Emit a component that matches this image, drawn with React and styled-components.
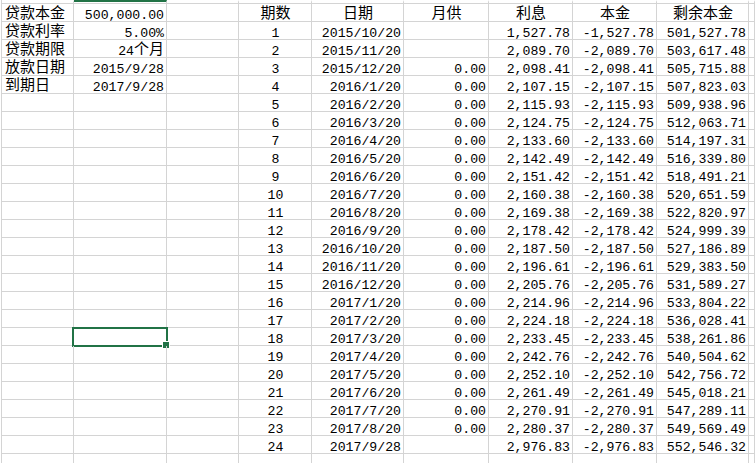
import styled, { createGlobalStyle } from "styled-components";

const GRID = "#d4d4d4";
const GREEN = "#217346";
const COLS = "72px 93px 72px 73px 92px 85px 84px 84px 92px 1fr";

const GlobalStyle = createGlobalStyle`
    html, body {
        margin: 0;
        padding: 0;
        background: #fff;
        overflow: hidden;
    }
`

const Sheet = styled.div`
    width: 755px;
    height: 463px;
    overflow: hidden;
    padding-left: 1px;
    box-sizing: border-box;
    font-family: "Liberation Mono", "Noto Sans CJK SC", monospace;
    font-size: 13.2px;
    color: #000;
`

const HeaderStrip = styled.div`
    display: grid;
    grid-template-columns: ${COLS};
    height: 4px;
    border-left: 1px solid ${GRID};
    border-bottom: 1px solid ${GRID};
    box-sizing: border-box;
`

const HeaderCell = styled.div`
    height: 3px;
    border-right: 1px solid ${GRID};
    border-top: 2px solid ${(p) => (p.$selected ? GREEN : "transparent")};
    box-sizing: border-box;
`

const Row = styled.div`
    display: grid;
    grid-template-columns: ${COLS};
    height: 18px;
    border-left: 1px solid ${GRID};
    border-bottom: 1px solid ${GRID};
    box-sizing: border-box;
`

const Cell = styled.div`
    position: relative;
    height: 17px;
    padding: 4px 2px 0 3px;
    line-height: 15px;
    box-sizing: border-box;
    border-right: 1px solid ${GRID};
    white-space: nowrap;
    text-align: ${(p) => p.$align || "left"};
`

const Cjk = styled.span`
    font-family: "Noto Sans CJK SC", sans-serif;
    font-size: 15px;
    line-height: 0;
    vertical-align: 1px;
`

const Selection = styled.div`
    position: absolute;
    left: -2px;
    top: -1px;
    width: 96px;
    height: 20px;
    border: 2px solid ${GREEN};
    box-sizing: border-box;
    pointer-events: none;
`

const FillHandle = styled.div`
    position: absolute;
    left: 88px;
    top: 12px;
    width: 8px;
    height: 8px;
    background: ${GREEN};
    border: 1px solid #fff;
    box-sizing: border-box;
`

const LETTERS = ["A", "B", "C", "D", "E", "F", "G", "H", "I", "J"];

const info = [
    ["贷款本金", "500,000.00"],
    ["贷款利率", "5.00%"],
    ["贷款期限", <>24<Cjk>个月</Cjk></>],
    ["放款日期", "2015/9/28"],
    ["到期日", "2017/9/28"],
];

const schedule = [
    ["2015/10/20", "", "1,527.78", "-1,527.78", "501,527.78"],
    ["2015/11/20", "", "2,089.70", "-2,089.70", "503,617.48"],
    ["2015/12/20", "0.00", "2,098.41", "-2,098.41", "505,715.88"],
    ["2016/1/20", "0.00", "2,107.15", "-2,107.15", "507,823.03"],
    ["2016/2/20", "0.00", "2,115.93", "-2,115.93", "509,938.96"],
    ["2016/3/20", "0.00", "2,124.75", "-2,124.75", "512,063.71"],
    ["2016/4/20", "0.00", "2,133.60", "-2,133.60", "514,197.31"],
    ["2016/5/20", "0.00", "2,142.49", "-2,142.49", "516,339.80"],
    ["2016/6/20", "0.00", "2,151.42", "-2,151.42", "518,491.21"],
    ["2016/7/20", "0.00", "2,160.38", "-2,160.38", "520,651.59"],
    ["2016/8/20", "0.00", "2,169.38", "-2,169.38", "522,820.97"],
    ["2016/9/20", "0.00", "2,178.42", "-2,178.42", "524,999.39"],
    ["2016/10/20", "0.00", "2,187.50", "-2,187.50", "527,186.89"],
    ["2016/11/20", "0.00", "2,196.61", "-2,196.61", "529,383.50"],
    ["2016/12/20", "0.00", "2,205.76", "-2,205.76", "531,589.27"],
    ["2017/1/20", "0.00", "2,214.96", "-2,214.96", "533,804.22"],
    ["2017/2/20", "0.00", "2,224.18", "-2,224.18", "536,028.41"],
    ["2017/3/20", "0.00", "2,233.45", "-2,233.45", "538,261.86"],
    ["2017/4/20", "0.00", "2,242.76", "-2,242.76", "540,504.62"],
    ["2017/5/20", "0.00", "2,252.10", "-2,252.10", "542,756.72"],
    ["2017/6/20", "0.00", "2,261.49", "-2,261.49", "545,018.21"],
    ["2017/7/20", "0.00", "2,270.91", "-2,270.91", "547,289.11"],
    ["2017/8/20", "0.00", "2,280.37", "-2,280.37", "549,569.49"],
    ["2017/9/28", "", "2,976.83", "-2,976.83", "552,546.32"],
];

const headings = ["期数", "日期", "月供", "利息", "本金", "剩余本金"];

// selected cell: B19 (row index 18)
const SELECTED_ROW = 18;

const App = () => {
    const rows = [];
    for (let r = 0; r < 27; r++) {
        const left = info[r] || ["", ""];
        let right = ["", "", "", "", "", ""];
        if (r === 0) right = headings.map((h) => <Cjk key={h}>{h}</Cjk>);
        else if (schedule[r - 1]) right = [String(r), ...schedule[r - 1]];
        const align = r === 0 ? "center" : "right";

        rows.push(
            <Row key={r}>
                <Cell>{left[0] && <Cjk>{left[0]}</Cjk>}</Cell>
                <Cell $align="right">
                    {left[1]}
                    {r === SELECTED_ROW && (
                        <Selection>
                            <FillHandle />
                        </Selection>
                    )}
                </Cell>
                <Cell />
                <Cell $align="center">{right[0]}</Cell>
                <Cell $align={align}>{right[1]}</Cell>
                <Cell $align={align}>{right[2]}</Cell>
                <Cell $align={align}>{right[3]}</Cell>
                <Cell $align={align}>{right[4]}</Cell>
                <Cell $align={align}>{right[5]}</Cell>
                <Cell />
            </Row>
        );
    }

    return (
        <>
            <GlobalStyle />
            <Sheet>
                <HeaderStrip>
                    {LETTERS.map((l) => (
                        <HeaderCell key={l} $selected={l === "B"} />
                    ))}
                </HeaderStrip>
                {rows}
            </Sheet>
        </>
    );
};

export default App;
